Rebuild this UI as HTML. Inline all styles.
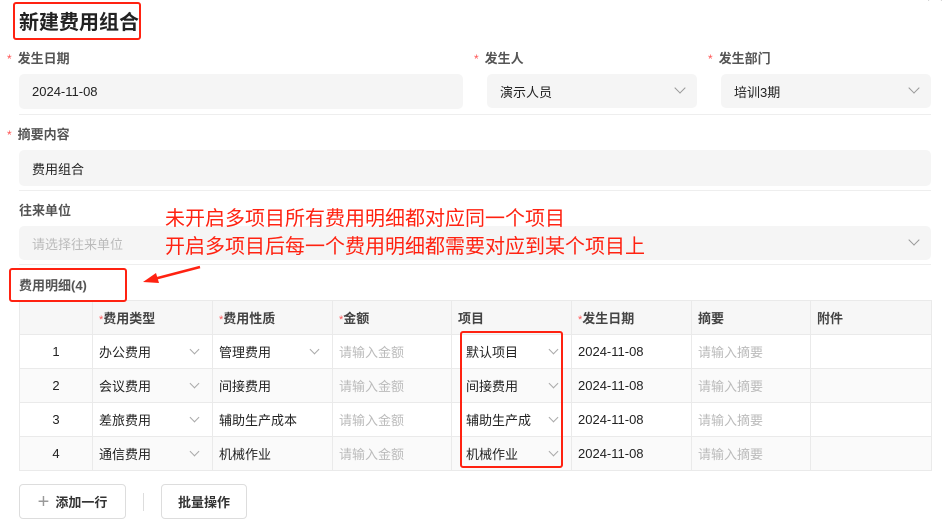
<!DOCTYPE html>
<html><head><meta charset="utf-8"><style>
*{margin:0;padding:0;box-sizing:border-box}
body{width:945px;height:525px;background:#fff;position:relative;overflow:hidden;font-family:"Liberation Sans","Noto Sans CJK SC",sans-serif;font-size:13px;color:#222}
.a{position:absolute}
.lbl{position:absolute;font-size:13px;font-weight:bold;color:#555}
.st{color:#f55;font-weight:normal;margin-right:6px;font-size:12px}
.inp{position:absolute;background:#f5f5f5;border-radius:5px;padding-left:13px;display:flex;align-items:center;font-size:13px;color:#222}
.hr{position:absolute;height:1px;background:#eee}
.chev{position:absolute;width:8px;height:8px;border-right:1.2px solid #999;border-bottom:1.2px solid #999;transform:rotate(45deg)}
table{position:absolute;left:19px;top:300px;border-collapse:collapse;font-size:13px}
td{border:1px solid #eaeaea;height:34px;padding-left:6px;position:relative}
tr.h td{background:#f7f7f7;font-weight:bold;color:#444;height:34px}
tr.g td{background:#fafafa}
td.p{padding-left:14px;white-space:nowrap;overflow:hidden}
.ph{color:#bbb}
.rs{color:#f55;font-weight:normal;font-size:11px}
.c{position:absolute;right:14px;top:11px;width:7px;height:7px;border-right:1.2px solid #aaa;border-bottom:1.2px solid #aaa;transform:rotate(45deg)}
.btn{position:absolute;border:1px solid #ddd;border-radius:4px;display:flex;align-items:center;justify-content:center;font-weight:bold;font-size:13px;color:#333}
.red{position:absolute;border:2px solid #f21;border-radius:3px;z-index:5}
</style></head><body>
<div class="a" style="left:19px;top:6px;font-size:20px;font-weight:bold;color:#222">新建费用组合</div>
<div class="red" style="left:13px;top:2px;width:128px;height:38px"></div>
<div class="a" style="left:930px;top:-5px;width:10px;height:10px;border-left:1.2px solid #aaa;border-top:1.2px solid #aaa;transform:rotate(45deg)"></div>

<div class="lbl" style="left:7px;top:48px"><span class="st">*</span>发生日期</div>
<div class="inp" style="left:19px;top:74px;width:444px;height:35px">2024-11-08</div>
<div class="lbl" style="left:474px;top:48px"><span class="st">*</span>发生人</div>
<div class="inp" style="left:487px;top:74px;width:210px;height:34px">演示人员<div class="chev" style="right:13px;top:10px"></div></div>
<div class="lbl" style="left:708px;top:48px"><span class="st">*</span>发生部门</div>
<div class="inp" style="left:721px;top:74px;width:210px;height:34px">培训3期<div class="chev" style="right:13px;top:10px"></div></div>
<div class="hr" style="left:19px;top:114px;width:912px"></div>

<div class="lbl" style="left:7px;top:124px"><span class="st">*</span>摘要内容</div>
<div class="inp" style="left:19px;top:150px;width:912px;height:36px">费用组合</div>
<div class="hr" style="left:19px;top:190px;width:912px"></div>

<div class="lbl" style="left:19px;top:200px">往来单位</div>
<div class="inp" style="left:19px;top:226px;width:912px;height:34px;color:#bbb">请选择往来单位<div class="chev" style="right:13px;top:10px"></div></div>
<div class="hr" style="left:19px;top:264px;width:912px"></div>
<div class="a" style="left:165px;top:205px;font-size:20px;line-height:28px;color:#f21">未开启多项目所有费用明细都对应同一个项目<br>开启多项目后每一个费用明细都需要对应到某个项目上</div>
<svg class="a" style="left:140px;top:262px" width="62" height="24"><path d="M60 5 L14 17" stroke="#f21" stroke-width="2.5"/><path d="M3 20 L16 11 L19 21 Z" fill="#f21"/></svg>

<div class="a" style="left:19px;top:275px;font-size:13px;font-weight:bold;color:#555">费用明细(4)</div>
<div class="red" style="left:9px;top:268px;width:118px;height:34px"></div>

<table>
<tr class="h"><td style="width:73px"></td><td style="width:120px"><span class="rs">*</span>费用类型</td><td style="width:120px"><span class="rs">*</span>费用性质</td><td style="width:119px"><span class="rs">*</span>金额</td><td style="width:120px">项目</td><td style="width:120px"><span class="rs">*</span>发生日期</td><td style="width:119px">摘要</td><td style="width:121px">附件</td></tr>
<tr><td style="text-align:center;padding:0">1</td><td>办公费用<i class="c"></i></td><td>管理费用<i class="c"></i></td><td class="ph">请输入金额</td><td class="p">默认项目<i class="c"></i></td><td>2024-11-08</td><td class="ph">请输入摘要</td><td></td></tr>
<tr class="g"><td style="text-align:center;padding:0">2</td><td>会议费用<i class="c"></i></td><td>间接费用</td><td class="ph">请输入金额</td><td class="p">间接费用<i class="c"></i></td><td>2024-11-08</td><td class="ph">请输入摘要</td><td></td></tr>
<tr><td style="text-align:center;padding:0">3</td><td>差旅费用<i class="c"></i></td><td>辅助生产成本</td><td class="ph">请输入金额</td><td class="p">辅助生产成<i class="c"></i></td><td>2024-11-08</td><td class="ph">请输入摘要</td><td></td></tr>
<tr class="g"><td style="text-align:center;padding:0">4</td><td>通信费用<i class="c"></i></td><td>机械作业</td><td class="ph">请输入金额</td><td class="p">机械作业<i class="c"></i></td><td>2024-11-08</td><td class="ph">请输入摘要</td><td></td></tr>
</table>
<div class="red" style="left:460px;top:331px;width:103px;height:137px"></div>

<div class="btn" style="left:19px;top:484px;width:107px;height:35px"><span style="font-weight:normal;font-size:20px;color:#999;margin-right:6px;line-height:1">+</span>添加一行</div>
<div class="a" style="left:143px;top:493px;width:1px;height:18px;background:#ddd"></div>
<div class="btn" style="left:161px;top:484px;width:86px;height:35px">批量操作</div>
</body></html>
